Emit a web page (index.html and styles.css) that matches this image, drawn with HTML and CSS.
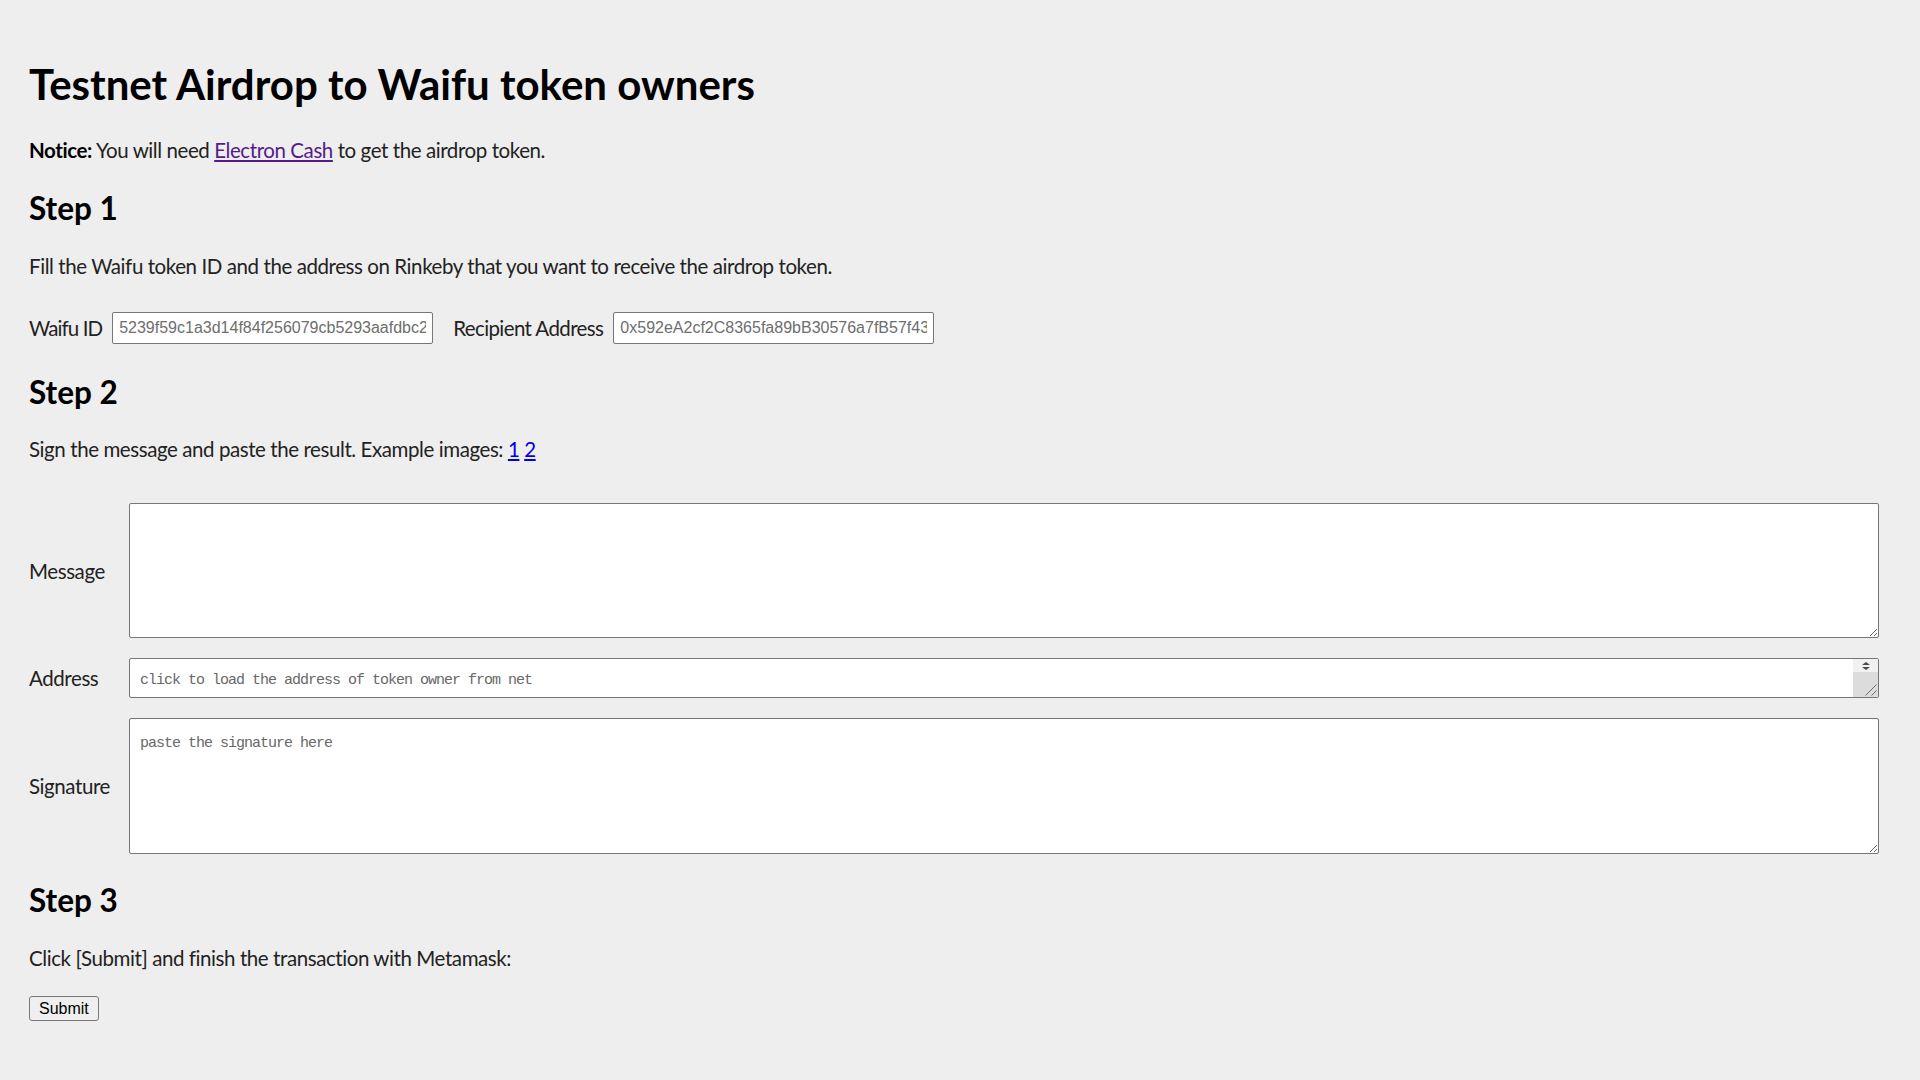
FILE: index.html
```html
<!DOCTYPE html>
<html lang="en">
<head>
<meta charset="utf-8">
<title>Testnet Airdrop to Waifu token owners</title>
<link rel="stylesheet" href="styles.css">
</head>
<body>
<main class="page">
  <h1 class="title">Testnet Airdrop to Waifu token owners</h1>
  <p class="notice"><strong>Notice:</strong> You will need <a class="link link-visited" href="#electron-cash">Electron Cash</a> to get the airdrop token.</p>

  <h2 class="step">Step 1</h2>
  <p class="text">Fill the Waifu token ID and the address on Rinkeby that you want to receive the airdrop token.</p>
  <div class="id-row">
    <label class="inline-label" for="waifu-id">Waifu ID</label>
    <input id="waifu-id" class="field" type="text" value="5239f59c1a3d14f84f256079cb5293aafdbc2">
    <label class="inline-label inline-label-next" for="recipient">Recipient Address</label>
    <input id="recipient" class="field" type="text" value="0x592eA2cf2C8365fa89bB30576a7fB57f43">
  </div>

  <h2 class="step step-after-row">Step 2</h2>
  <p class="text text-sign">Sign the message and paste the result. Example images: <a class="link" href="#example-1">1</a> <a class="link" href="#example-2">2</a></p>
  <div class="sign-grid">
    <label class="grid-label" for="message">Message</label>
    <textarea id="message" class="box box-message"></textarea>

    <label class="grid-label" for="address">Address</label>
    <div class="address-wrap">
      <textarea id="address" class="box box-address" placeholder="click to load the address of token owner from net"></textarea>
      <div class="scrollbar" aria-hidden="true">
        <div class="scroll-buttons">
          <span class="arrow arrow-up"></span>
          <span class="arrow arrow-down"></span>
        </div>
        <div class="scroll-corner">
          <svg class="grip" width="12" height="12" viewBox="0 0 12 12">
            <line x1="0.5" y1="11.5" x2="11.5" y2="0.5"/>
            <line x1="6.5" y1="11.5" x2="11.5" y2="6.5"/>
          </svg>
        </div>
      </div>
    </div>

    <label class="grid-label" for="signature">Signature</label>
    <textarea id="signature" class="box box-signature" placeholder="paste the signature here"></textarea>
  </div>

  <h2 class="step step-after-grid">Step 3</h2>
  <p class="text">Click [Submit] and finish the transaction with Metamask:</p>
  <button class="submit" type="button">Submit</button>
</main>
</body>
</html>
```
FILE: styles.css
```css
* {
  box-sizing: border-box;
}

html {
  background: #eeeeee;
}

body {
  margin: 0;
  background: #eeeeee;
  color: #222222;
  font-family: Lato, "Liberation Sans", sans-serif;
  font-size: 20.5px;
  letter-spacing: -0.42px;
}

.page {
  padding: 58px 41px 40px 29px;
}

.title {
  margin: 0;
  font-size: 42px;
  line-height: 52px;
  font-weight: 700;
  letter-spacing: normal;
  color: #000000;
}

.notice {
  margin: 27px 0 0;
  line-height: 26px;
}

.notice strong {
  color: #000000;
  font-weight: 700;
}

.step {
  margin: 26px 0 0;
  font-size: 31.5px;
  line-height: 38px;
  font-weight: 700;
  letter-spacing: normal;
  color: #000000;
}

.step-after-row {
  margin-top: 29px;
}

.step-after-grid {
  margin-top: 27px;
}

.text {
  margin: 26px 0 0;
  line-height: 26px;
}

.link {
  color: #0000ee;
  text-decoration: underline;
}

.link-visited {
  color: #551a8b;
}

/* Step 1: token id + recipient inputs on one line */
.id-row {
  display: flex;
  align-items: center;
  margin-top: 33px;
  height: 32px;
}

.inline-label {
  line-height: 26px;
  letter-spacing: -0.9px;
}

.inline-label-next {
  margin-left: 20px;
  letter-spacing: -0.6px;
}

.field {
  width: 321px;
  height: 32px;
  margin: 0 0 0 10px;
  padding: 0 6px;
  border: 1px solid #767676;
  border-radius: 2px;
  background: #ffffff;
  font-family: "Liberation Sans", Arial, sans-serif;
  font-size: 16px;
  letter-spacing: normal;
  color: #6e6e6e;
  outline: none;
}

/* Step 2: label column + wide text boxes */
.text-sign {
  margin-top: 25px;
}

.sign-grid {
  display: grid;
  grid-template-columns: 100px 1fr;
  row-gap: 20px;
  align-items: center;
  margin-top: 41px;
}

.grid-label {
  line-height: 26px;
}

.box {
  display: block;
  width: 100%;
  margin: 0;
  border: 1px solid #767676;
  border-radius: 2px;
  background: #ffffff;
  padding: 10px 10px;
  font-family: "Liberation Mono", monospace;
  font-size: 15px;
  letter-spacing: -1px;
  color: #222222;
  outline: none;
}

.box::placeholder {
  color: #686868;
}

.box-message {
  height: 135px;
}

.box-signature {
  height: 136px;
  padding-top: 16px;
}

.address-wrap {
  position: relative;
}

.box-address {
  height: 40px;
  padding-top: 13px;
  padding-bottom: 0;
  resize: none;
  overflow: hidden;
}

/* scroll buttons and resize corner drawn over the right edge of the address box */
.scrollbar {
  position: absolute;
  top: 1px;
  right: 1px;
  bottom: 1px;
  width: 25px;
  display: flex;
  flex-direction: column;
}

.scroll-buttons {
  height: 13px;
  background: #f1f1f1;
  display: flex;
  flex-direction: column;
  align-items: center;
  justify-content: center;
  gap: 2px;
}

.arrow {
  width: 0;
  height: 0;
  border-left: 4px solid transparent;
  border-right: 4px solid transparent;
}

.arrow-up {
  border-bottom: 3.5px solid #4a4a4a;
}

.arrow-down {
  border-top: 3.5px solid #4a4a4a;
}

.scroll-corner {
  flex: 1;
  background: #dcdcdc;
  display: flex;
  align-items: flex-end;
  justify-content: flex-end;
  padding: 0 1px 1px 0;
}

.grip line {
  stroke: #6f6f6f;
  stroke-width: 1;
}

/* Step 3 */
.submit {
  display: block;
  margin-top: 25px;
  height: 25px;
  padding: 0 9px;
  border: 1px solid #767676;
  border-radius: 3px;
  background: #efefef;
  color: #000000;
  font-family: "Liberation Sans", Arial, sans-serif;
  font-size: 16px;
  letter-spacing: normal;
}
```
